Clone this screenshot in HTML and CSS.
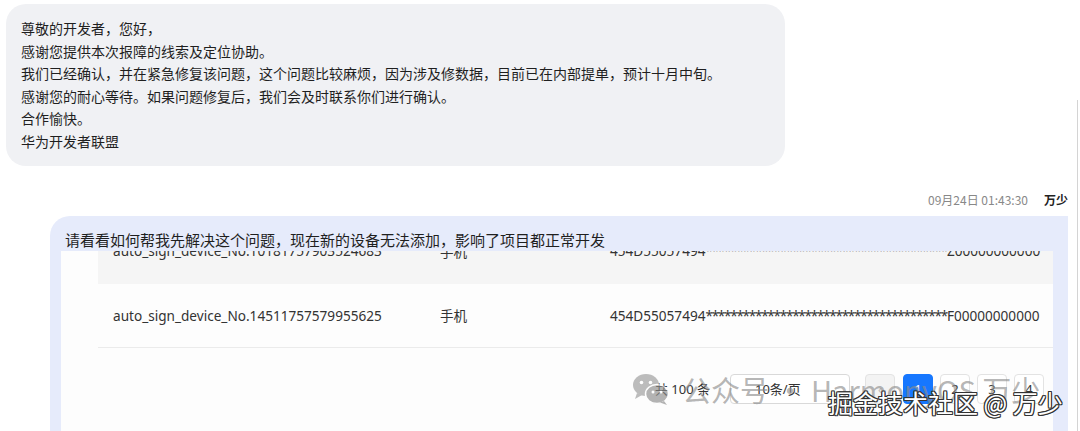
FILE: index.html
```html
<!DOCTYPE html>
<html lang="zh-CN">
<head>
    <meta charset="UTF-8">
    <meta name="viewport" content="width=device-width, initial-scale=1.0">
    <title>工单对话</title>
    <link rel="stylesheet" href="styles.css">
</head>
<body>
    <div class="page">
        <div class="chat">
            <div class="bubble bubble-in">
                <p>尊敬的开发者，您好，</p>
                <p>感谢您提供本次报障的线索及定位协助。</p>
                <p>我们已经确认，并在紧急修复该问题，这个问题比较麻烦，因为涉及修数据，目前已在内部提单，预计十月中旬。</p>
                <p>感谢您的耐心等待。如果问题修复后，我们会及时联系你们进行确认。</p>
                <p>合作愉快。</p>
                <p>华为开发者联盟</p>
            </div>

            <div class="meta">
                <span class="time">09月24日 01:43:30</span>
                <span class="author">万少</span>
            </div>

            <div class="bubble bubble-out">
                <p class="out-text">请看看如何帮我先解决这个问题，现在新的设备无法添加，影响了项目都正常开发</p>
                <div class="shot">
                    <div class="device-table">
                        <div class="row row-alt">
                            <span>auto_sign_device_No.10181757903524683</span>
                            <span>手机</span>
                            <span class="udid"><span>454D55057494</span><span class="stars">***************************************</span><span>Z00000000000</span></span>
                        </div>
                        <div class="row">
                            <span>auto_sign_device_No.14511757579955625</span>
                            <span>手机</span>
                            <span class="udid"><span>454D55057494</span><span class="stars">***************************************</span><span>F00000000000</span></span>
                        </div>
                    </div>

                    <div class="pager">
                        <span class="total">共 100 条</span>
                        <span class="size-select">10条/页</span>
                        <span class="page-btn prev">‹</span>
                        <span class="page-btn active">1</span>
                        <span class="page-btn">2</span>
                        <span class="page-btn">3</span>
                        <span class="page-btn">4</span>
                    </div>
                </div>

                <div class="wm-wechat">
                    <svg class="wm-icon" width="38" height="32" viewBox="0 0 38 32">
                        <ellipse cx="14" cy="12" rx="13" ry="11" fill="#9a9a9a"/>
                        <path d="M5 20 L3 26 L10 22 Z" fill="#9a9a9a"/>
                        <circle cx="9.5" cy="9.5" r="1.8" fill="#fff"/>
                        <circle cx="18.5" cy="9.5" r="1.8" fill="#fff"/>
                        <ellipse cx="25" cy="21" rx="11.5" ry="9.5" fill="#8c8c8c" stroke="#fff" stroke-width="1.5"/>
                        <path d="M32 28 L35 32 L28 29.5 Z" fill="#8c8c8c"/>
                        <circle cx="21" cy="19" r="1.5" fill="#fff"/>
                        <circle cx="29" cy="19" r="1.5" fill="#fff"/>
                    </svg>
                    <span>公众号 · HarmonyOS 万少</span>
                </div>
                <div class="wm-juejin">掘金技术社区 @ 万少</div>
            </div>
        </div>
        <div class="rail"></div>
    </div>
</body>
</html>
```

FILE: styles.css
```css
body {
    margin: 0;
    background-color: #fff;
    font-family: "Noto Sans CJK SC", "Noto Sans", sans-serif;
    color: #1f1f1f;
    height: 431px;
    overflow: hidden;
}
p {
    margin: 0;
}
.page {
    display: flex;
}
.chat {
    width: 1068px;
}
.rail {
    width: 1px;
    height: 340px;
    margin: 100px 0 0 9px;
    background-color: #d4d4d4;
}
.bubble-in {
    box-sizing: border-box;
    width: 779px;
    margin: 4px 0 0 6px;
    padding: 13px 15px;
    background-color: #f0f1f4;
    border-radius: 20px;
    font-size: 14px;
    line-height: 22.6px;
}
.meta {
    display: flex;
    justify-content: flex-end;
    align-items: center;
    gap: 16px;
    height: 20px;
    margin-top: 24px;
    font-size: 12px;
}
.meta .time {
    color: #888;
}
.meta .author {
    color: #222;
    font-weight: bold;
}
.bubble-out {
    position: relative;
    margin: 6px 0 0 50px;
    padding: 13px 15px 0 11px;
    height: 220px;
    background-color: #e6ebfb;
    border-radius: 20px 0 0 0;
}
.out-text {
    padding-left: 4px;
    font-size: 15px;
    line-height: 22px;
}
.shot {
    height: 190px;
    background-color: #fdfdfd;
    overflow: hidden;
    font-family: "Noto Sans", "Noto Sans CJK SC", sans-serif;
}
.device-table {
    margin: -33px 0 0 37px;
}
.row {
    display: grid;
    grid-template-columns: 327px 170px 1fr;
    align-items: center;
    height: 63px;
    padding: 0 12px 0 15px;
    border-bottom: 1px solid #ebebeb;
    font-size: 13.6px;
    color: #333;
}
.row-alt {
    height: 66px;
    background-color: #f5f5f5;
    border-bottom: none;
}
.udid {
    display: flex;
    align-items: center;
    white-space: nowrap;
}
.stars {
    letter-spacing: -1.3px;
}
.pager {
    display: flex;
    align-items: center;
    justify-content: flex-end;
    padding: 26px 9px 0 0;
    font-size: 13px;
    color: #333;
}
.total {
    margin-right: 20px;
}
.size-select {
    box-sizing: border-box;
    width: 120px;
    height: 30px;
    line-height: 28px;
    padding-left: 24px;
    margin-right: 15px;
    border: 1px solid #d9d9d9;
    border-radius: 4px;
    background-color: #fff;
}
.page-btn {
    box-sizing: border-box;
    width: 30px;
    height: 30px;
    line-height: 28px;
    margin-right: 7px;
    text-align: center;
    border: 1px solid #e3e3e3;
    border-radius: 4px;
    background-color: #fff;
}
.page-btn:last-child {
    margin-right: 0;
}
.page-btn.prev {
    margin-right: 8px;
    background-color: #f3f3f3;
    color: #bbb;
}
.page-btn.active {
    background-color: #1677ff;
    border-color: #1677ff;
    color: #fff;
}
.wm-wechat {
    position: absolute;
    left: 582px;
    top: 155px;
    display: flex;
    align-items: center;
    gap: 12px;
    font-family: "Noto Sans CJK SC", sans-serif;
    font-size: 29px;
    line-height: 36px;
    color: rgba(140, 140, 140, 0.65);
    white-space: nowrap;
}
.wm-icon {
    opacity: 0.65;
}
.wm-juejin {
    position: absolute;
    left: 778px;
    top: 170px;
    font-family: "Noto Sans CJK SC", sans-serif;
    font-size: 25px;
    line-height: 32px;
    color: #fff;
    white-space: nowrap;
    text-shadow: 1px 0 0 #333, -1px 0 0 #333, 0 1px 0 #333, 0 -1px 0 #333,
        1px 1px 0 #333, -1px -1px 0 #333, 1px -1px 0 #333, -1px 1px 0 #333;
}
```
